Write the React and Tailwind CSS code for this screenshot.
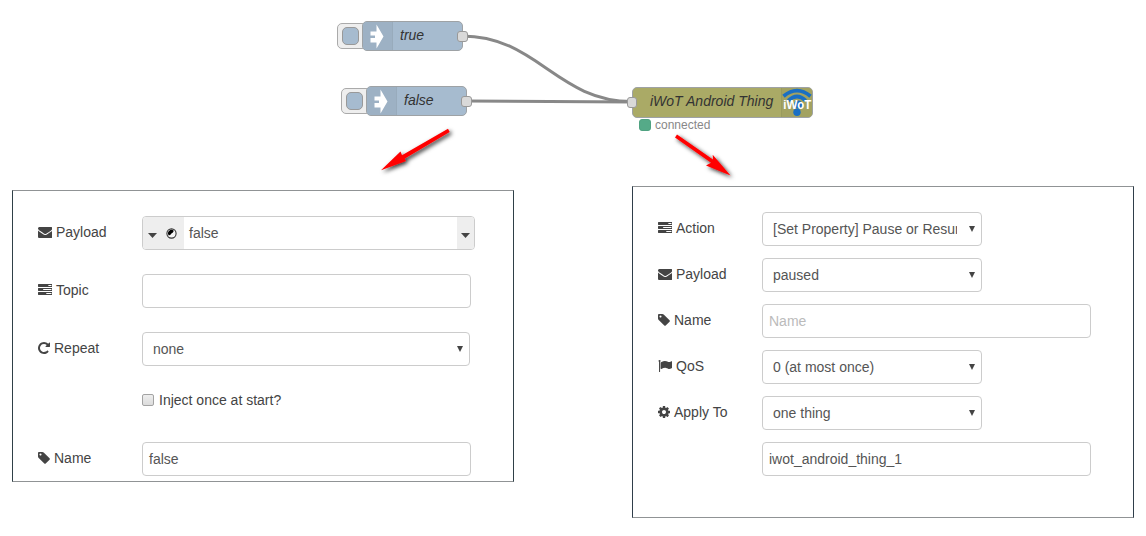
import React from 'react';

const ICONS = {
  tasks:
    'M1024 1408h640v-128h-640v128zm-384-512h1024v-128h-1024v128zm640-512h384v-128h-384v128zm512 832v256q0 26-19 45t-45 19h-1664q-26 0-45-19t-19-45v-256q0-26 19-45t45-19h1664q26 0 45 19t19 45zm0-512v256q0 26-19 45t-45 19h-1664q-26 0-45-19t-19-45v-256q0-26 19-45t45-19h1664q26 0 45 19t19 45zm0-512v256q0 26-19 45t-45 19h-1664q-26 0-45-19t-19-45v-256q0-26 19-45t45-19h1664q26 0 45 19t19 45z',
  envelope:
    'M1792 710v794q0 66-47 113t-113 47h-1472q-66 0-113-47t-47-113v-794q44 49 101 87 362 246 497 345 57 42 92.500 65.500t94.500 48 110 24.500h2q51 0 110-24.500t94.500-48 92.500-65.500q170-123 498-345 57-39 100-87zm0-294q0 79-49 151t-122 123q-376 261-468 325-10 7-42.500 31t-54 38.500-52 32.500-57.500 27-50 9h-2q-23 0-50-9t-57.500-27-52-32.500-54-38.500-42.500-31q-91-64-262-182.500t-205-142.500q-62-42-117-115.500t-55-136.500q0-78 41.500-130t118.500-52h1472q65 0 112.500 47t47.500 113z',
  repeat:
    'M1664 256v448q0 26-19 45t-45 19h-448q-42 0-59-40-17-39 14-69l138-138q-148-137-349-137-104 0-198.500 40.500t-163.500 109.500-109.500 163.500-40.500 198.500 40.500 198.500 109.500 163.500 163.500 109.500 198.500 40.500q119 0 225-52t179-147q7-10 23-12 15 0 25 9l137 138q9 8 9.500 20.500t-7.500 22.500q-109 132-264 204.500t-327 72.500q-156 0-298-61t-245-164-164-245-61-298 61-298 164-245 245-164 298-61q147 0 284.500 55.500t244.500 156.500l130-129q29-31 70-14 39 17 39 59z',
  tag:
    'M576 448q0-53-37.500-90.500t-90.500-37.500-90.500 37.500-37.500 90.500 37.500 90.500 90.500 37.500 90.500-37.500 37.500-90.500zm1067 576q0 53-37 90l-491 492q-39 37-91 37-53 0-90-37l-715-716q-38-37-64.500-101t-26.500-117v-416q0-52 38-90t90-38h416q53 0 117 26.500t102 64.500l715 714q37 39 37 91z',
  flag:
    'M320 256q0 72-64 110v1266q0 13-9.500 22.500t-22.500 9.500h-64q-13 0-22.500-9.500t-9.500-22.500v-1266q-64-38-64-110 0-53 37.500-90.500t90.500-37.500 90.500 37.500 37.500 90.500zm1472 64v763q0 25-12.500 38.500t-39.500 27.500q-215 116-369 116-61 0-123.500-22t-108.500-48-115.500-48-142.500-22q-192 0-464 146-17 9-33 9-26 0-45-19t-19-45v-742q0-32 31-55 21-14 79-43 236-120 421-120 107 0 200 29t219 88q38 19 88 19 54 0 117.500-21t110-47 88-47 54.500-21q26 0 45 19t19 45z',
  cog:
    'M1152 896q0-106-75-181t-181-75-181 75-75 181 75 181 181 75 181-75 75-181zm512-109v222q0 12-8 23t-20 13l-185 28q-19 54-39 91 35 50 107 138 10 12 10 25t-9 23q-27 37-99 108t-94 71q-12 0-26-9l-138-108q-44 23-91 38-16 136-29 186-7 28-36 28h-222q-14 0-24.500-8.500t-11.500-21.500l-28-184q-49-16-90-37l-141 107q-10 9-25 9-14 0-25-11-126-114-165-168-7-10-7-23 0-12 8-23 15-21 51-66.500t54-70.500q-27-50-41-99l-183-27q-13-2-21-12.500t-8-23.500v-222q0-12 8-23t19-13l186-28q14-46 39-92-40-57-107-138-10-12-10-24 0-10 9-23 26-36 98.500-107.500t94.500-71.500q13 0 26 10l138 107q44-23 91-38 16-136 29-186 7-28 36-28h222q14 0 24.500 8.500t11.500 21.500l28 184q49 16 90 37l142-107q9-9 24-9 13 0 25 10 129 119 165 170 7 8 7 22 0 12-8 23-15 21-51 66.500t-54 70.500q26 50 41 98l183 28q13 2 21 12.500t8 23.500z',
};

// Glyphs whose artwork fills the full width of the em square.
const WIDE = { tasks: true, envelope: true, flag: true };

function Icon({ name }) {
  return (
    <svg
      viewBox={WIDE[name] ? '0 0 1792 1792' : '128 0 1536 1792'}
      preserveAspectRatio="none"
      fill="#444"
      className={WIDE[name] ? 'ml-[0.5px] h-[14px] w-[14.5px] shrink-0' : 'ml-px h-[14px] w-[12px] shrink-0'}
    >
      <path d={ICONS[name]} />
    </svg>
  );
}

function Row({ icon, label, children }) {
  return (
    <div className="flex h-[34px]">
      <div className="flex h-8 w-[105px] shrink-0 items-center gap-1 text-[#444]">
        {icon && <Icon name={icon} />}
        {label && <span>{label}</span>}
      </div>
      {children}
    </div>
  );
}

function TextField({ value, placeholder }) {
  return (
    <div className="flex h-[34px] w-[329px] items-center rounded border border-[#ccc] bg-white px-1.5 text-[#555]">
      {value ? <span>{value}</span> : <span className="text-[#bbb]">{placeholder}</span>}
    </div>
  );
}

function Select({ value, wide }) {
  return (
    <div
      className={
        (wide ? 'w-[328px]' : 'w-[220px]') +
        ' flex h-[34px] items-center rounded border border-[#ccc] bg-white pr-[6px] pl-2.5 text-[#555]'
      }
    >
      <span className="grow overflow-hidden whitespace-nowrap">{value}</span>
      <svg viewBox="0 0 6 6" className="mb-px ml-[12px] h-[6px] w-[6px] shrink-0" fill="#444">
        <path d="M0 0H6L3 6Z" />
      </svg>
    </div>
  );
}

function Caret() {
  return (
    <svg viewBox="0 0 9 5" className="mt-1 h-[5px] w-[9px] shrink-0" fill="#444">
      <path d="M0 0H9L4.500 5Z" />
    </svg>
  );
}

function TypedField() {
  return (
    <div className="flex h-[34px] w-[333px] overflow-hidden rounded border border-[#ccc] bg-white text-[#555]">
      <div className="flex w-[41px] shrink-0 items-center gap-[9px] bg-[#eee] pl-[5px]">
        <Caret />
        <svg viewBox="0 0 11 11" className="mt-px h-[11px] w-[11px]">
          <circle cx="5.500" cy="5.500" r="4.600" fill="#f4f4f4" stroke="#333" strokeWidth="1.100" />
          <path d="M2.700 7.400A3.500 3.500 0 0 1 7.800 2.700Q7.200 4.900 5.400 5.400Q4.900 7 2.700 7.400Z" fill="#000" />
        </svg>
      </div>
      <span className="flex grow items-center pl-[5px]">false</span>
      <div className="flex w-[17px] shrink-0 items-center bg-[#eee] pl-[4px]">
        <Caret />
      </div>
    </div>
  );
}

function InjectNode({ label, place }) {
  return (
    <div className={place + ' absolute flex h-[30px] items-center'}>
      <div className="flex h-[26px] w-[30px] items-center rounded-[5px] border border-[#aaa] bg-[#eee] pl-1">
        <div className="h-[18px] w-[17px] rounded-[5px] border border-[#999] bg-[#a6bbcf]" />
      </div>
      <div className="relative -ml-[5px] flex h-[30px] w-[101px] rounded-[5px] border border-[#9ea2a5] bg-[#a6bbcf]">
        <div className="flex w-[30px] items-center rounded-l-[4px] border-r border-[#98abbc] bg-[#9db1c4] pl-[7px]">
          <svg viewBox="0 0 14 25" className="h-[25px] w-[14px]" fill="#fff">
            <path d="M0.500 7.500H6.500V0.500L13.500 12.500L6.500 24.500V18.500H0.500V14H5V11.500H0.500Z" />
          </svg>
        </div>
        <span className="mt-[3px] ml-[7px] text-sm leading-5 text-[#333] italic">{label}</span>
      </div>
      <div className="relative -ml-[6px] h-[11px] w-[11px] rounded-[3px] border border-[#999] bg-[#d9d9d9]" />
    </div>
  );
}

function ThingNode() {
  return (
    <div className="absolute top-[86px] left-[627px] flex h-[32px] items-center">
      <div className="relative z-10 h-[11px] w-[10px] rounded-[3px] border border-[#999] bg-[#d9d9d9]" />
      <div className="-ml-[5px] flex h-[31px] w-[181px] justify-between rounded-[5px] border border-[#9ea2a5] bg-[#aaaa66]">
        <span className="mt-[3px] ml-[17px] text-sm leading-5 whitespace-nowrap text-[#333] italic">
          iWoT Android Thing
        </span>
        <div className="w-[31px] shrink-0 rounded-r-[4px] border-l border-[#999b5d] bg-[#a2a261]">
          <svg viewBox="0 0 30 29" className="h-[29px] w-[30px]">
            <g fill="none" stroke="#1a6fc4" strokeWidth="3.800">
              <path d="M1.500 8.200Q15 -3 28.500 8.200" />
              <path d="M6.300 12.700Q15 4.500 23.700 12.700" />
            </g>
            <circle cx="15" cy="24.300" r="3.700" fill="#1a6fc4" />
            <circle cx="16" cy="16.500" r="4" fill="#1a6fc4" />
            <text
              x="1.300"
              y="21.300"
              textLength="28"
              lengthAdjust="spacingAndGlyphs"
              fill="#fff"
              fontSize="12.500"
              fontWeight="700"
              fontFamily="Liberation Sans, sans-serif"
            >
              iWoT
            </text>
          </svg>
        </div>
      </div>
    </div>
  );
}

function Canvas() {
  return (
    <div className="relative h-[186px]">
      <svg viewBox="0 0 1146 186" className="absolute inset-0 h-[186px] w-[1146px]">
        <g fill="none" stroke="#888" strokeWidth="3">
          <path d="M462 36C537 36 557 101.500 632 101.500" />
          <path d="M467 101L632 102" />
        </g>
      </svg>
      <InjectNode label="true" place="top-[21px] left-[337px]" />
      <InjectNode label="false" place="top-[86px] left-[341px]" />
      <ThingNode />
      <div className="absolute top-[118px] left-[639px] flex items-center gap-1 text-xs leading-[14px] text-[#888]">
        <span className="h-3 w-3 rounded-[3px] border border-[#4fa281] bg-[#55aa88]" />
        connected
      </div>
      <svg viewBox="0 0 1146 186" className="absolute inset-0 h-[186px] w-[1146px]">
        <defs>
          <filter id="shadow" x="-20%" y="-20%" width="150%" height="150%">
            <feDropShadow dx="2" dy="2" stdDeviation="2" floodColor="#000" floodOpacity="0.800" />
          </filter>
        </defs>
        <g fill="#f00" filter="url(#shadow)">
          <path d="M448 128.800L449.700 132L404.500 158.800L406 161L381 170.300L400.500 151.500L402 155.200Z" />
        </g>
        <g fill="#f00" filter="url(#shadow)">
          <path d="M675 137.400L677 134.400L713 159.500L712.700 154.800L730.500 175.500L706 165.500L711 162.800Z" />
        </g>
      </svg>
    </div>
  );
}

export default function App() {
  return (
    <div
      className="h-[536px] w-[1146px] overflow-hidden bg-white text-sm leading-5"
      style={{ fontFamily: '"Liberation Sans", Arial, sans-serif' }}
    >
      <Canvas />
      <div className="flex items-start justify-between pr-3 pl-3">
        <section className="mt-1 flex h-[292px] w-[502px] flex-col gap-6 border border-x-[#2f4048] border-y-[#909395] pt-[25px] pl-[24px]">
          <Row icon="envelope" label="Payload">
            <TypedField />
          </Row>
          <Row icon="tasks" label="Topic">
            <TextField />
          </Row>
          <Row icon="repeat" label="Repeat">
            <Select value="none" wide />
          </Row>
          <div className="-mt-[7px] mb-px flex h-[34px] items-center gap-[5px] pl-[105px] text-[#444]">
            <span className="h-3 w-3 rounded-[2px] border border-[#a3a3a3] bg-linear-to-b from-[#eee] to-[#dcdcdc]" />
            <span>Inject once at start?</span>
          </div>
          <Row icon="tag" label="Name">
            <TextField value="false" />
          </Row>
        </section>
        <section className="flex h-[332px] w-[502px] flex-col gap-3 border border-x-[#2f3e4a] border-y-[#909395] pt-[25px] pl-[24px]">
          <Row icon="tasks" label="Action">
            <Select value="[Set Property] Pause or Resume" />
          </Row>
          <Row icon="envelope" label="Payload">
            <Select value="paused" />
          </Row>
          <Row icon="tag" label="Name">
            <TextField placeholder="Name" />
          </Row>
          <Row icon="flag" label="QoS">
            <Select value="0 (at most once)" />
          </Row>
          <Row icon="cog" label="Apply To">
            <Select value="one thing" />
          </Row>
          <Row>
            <TextField value="iwot_android_thing_1" />
          </Row>
        </section>
      </div>
    </div>
  );
}
